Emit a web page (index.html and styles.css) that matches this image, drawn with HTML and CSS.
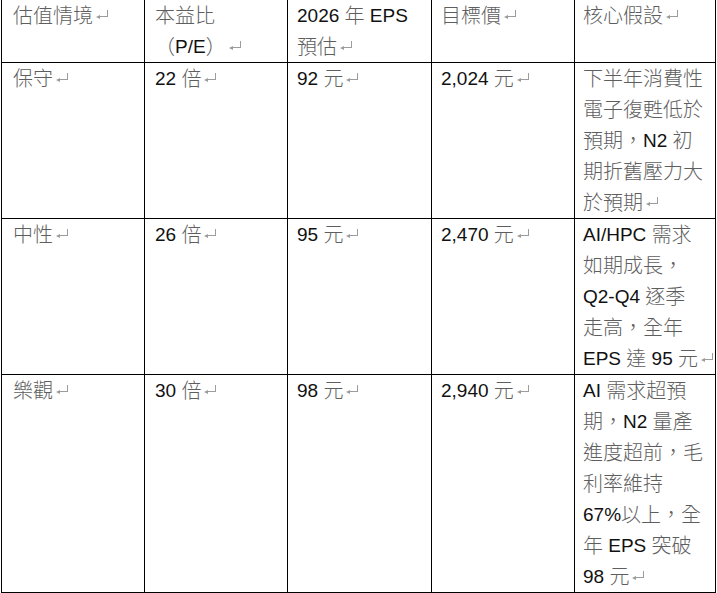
FILE: index.html
```html
<!DOCTYPE html>
<html lang="zh-Hant">
<head>
<meta charset="utf-8">
<title>估值情境</title>
<link rel="stylesheet" href="styles.css">
</head>
<body>
<div class="table">
  <div class="cell head"><span class="c">估值情境</span><span class="pm"></span></div>
  <div class="cell head"><span class="c">本益比（</span>P/E<span class="c">）</span><span class="pm"></span></div>
  <div class="cell head">2026 <span class="c">年</span> EPS <span class="c">預估</span><span class="pm"></span></div>
  <div class="cell head"><span class="c">目標價</span><span class="pm"></span></div>
  <div class="cell head"><span class="c">核心假設</span><span class="pm"></span></div>

  <div class="cell"><span class="c">保守</span><span class="pm"></span></div>
  <div class="cell">22 <span class="c">倍</span><span class="pm"></span></div>
  <div class="cell">92 <span class="c">元</span><span class="pm"></span></div>
  <div class="cell">2,024 <span class="c">元</span><span class="pm"></span></div>
  <div class="cell"><span class="c">下半年消費性電子復甦低於預期，</span>N2 <span class="c">初期折舊壓力大於預期</span><span class="pm"></span></div>

  <div class="cell"><span class="c">中性</span><span class="pm"></span></div>
  <div class="cell">26 <span class="c">倍</span><span class="pm"></span></div>
  <div class="cell">95 <span class="c">元</span><span class="pm"></span></div>
  <div class="cell">2,470 <span class="c">元</span><span class="pm"></span></div>
  <div class="cell">AI/HPC <span class="c">需求如期成長，</span>Q2-Q4 <span class="c">逐季走高，全年</span> EPS <span class="c">達</span> 95 <span class="c">元</span><span class="pm"></span></div>

  <div class="cell"><span class="c">樂觀</span><span class="pm"></span></div>
  <div class="cell">30 <span class="c">倍</span><span class="pm"></span></div>
  <div class="cell">98 <span class="c">元</span><span class="pm"></span></div>
  <div class="cell">2,940 <span class="c">元</span><span class="pm"></span></div>
  <div class="cell">AI <span class="c">需求超預期，</span>N2 <span class="c">量產進度超前，毛利率維持</span> 67%<span class="c">以上，全年</span> EPS <span class="c">突破</span> 98 <span class="c">元</span><span class="pm"></span></div>
</div>
</body>
</html>
```

FILE: styles.css
```css
html, body {
  margin: 0;
  padding: 0;
  background: #ffffff;
}

body {
  font-family: "Liberation Sans", Arial, "Noto Sans CJK TC", sans-serif;
  font-size: 19px;
  line-height: 31px;
  color: #111111;
}

.table {
  display: grid;
  grid-template-columns: 143px 143px 144px 143px 141px;
  width: max-content;
  margin-left: 1px;
  border-left: 1px solid #000000;
}

.cell {
  box-sizing: border-box;
  border-right: 1px solid #000000;
  border-bottom: 1px solid #000000;
  padding: 0 10px 0 10px;
  min-width: 0;
}

.cell:nth-child(5n+1) { padding-left: 11px; }
.cell:nth-child(5n+2) { padding-left: 10px; }
.cell:nth-child(5n+3) { padding-left: 9px; }
.cell:nth-child(5n+4) { padding-left: 9px; }
.cell:nth-child(5n+5) { padding-left: 8px; padding-right: 10px; }

.c {
  font-family: "Noto Sans CJK TC", "Noto Sans CJK SC", sans-serif;
  font-size: 20px;
  line-height: 20px;
  font-weight: 300;
  color: #5e5e5e;
  vertical-align: -1px;
}

/* Word paragraph mark: a small return arrow, drawn with CSS */
.pm {
  display: inline-block;
  position: relative;
  width: 0;
  height: 0;
}

.pm::before {
  content: "";
  position: absolute;
  left: 5px;
  bottom: 5px;
  width: 10px;
  height: 7px;
  box-sizing: border-box;
  border-right: 1px solid #9c9c9c;
  border-bottom: 1px solid #9c9c9c;
}

.pm::after {
  content: "";
  position: absolute;
  left: 3px;
  bottom: 3px;
  width: 0;
  height: 0;
  border-top: 2.5px solid transparent;
  border-bottom: 2.5px solid transparent;
  border-right: 4px solid #9c9c9c;
}
```
